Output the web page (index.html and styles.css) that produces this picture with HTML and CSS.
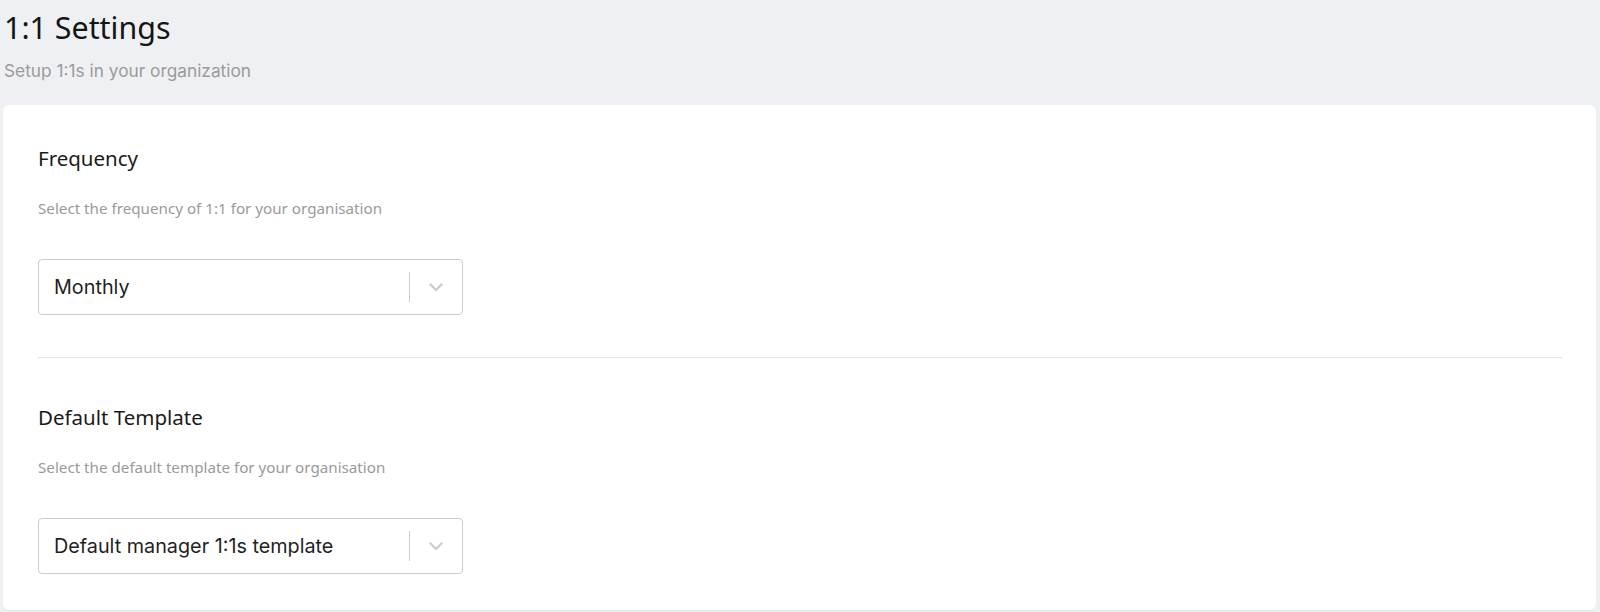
FILE: index.html
```html
<!DOCTYPE html>
<html lang="en">
<head>
<meta charset="utf-8">
<title>1:1 Settings</title>
<link rel="stylesheet" href="styles.css">
</head>
<body>
<header class="page-header">
  <h1 class="page-title">1:1 Settings</h1>
  <p class="page-subtitle">Setup 1:1s in your organization</p>
</header>
<main class="card">
  <section class="setting">
    <h2 class="setting-title">Frequency</h2>
    <p class="setting-desc">Select the frequency of 1:1 for your organisation</p>
    <div class="select">
      <span class="select-value">Monthly</span>
      <span class="select-sep"></span>
      <span class="select-arrow">
        <svg width="14" height="9" viewBox="0 0 14 9"><path d="M1.5 1.5 L7 7 L12.5 1.5" fill="none" stroke="#cccccc" stroke-width="2.4" stroke-linecap="round" stroke-linejoin="round"/></svg>
      </span>
    </div>
  </section>
  <hr class="divider">
  <section class="setting">
    <h2 class="setting-title">Default Template</h2>
    <p class="setting-desc">Select the default template for your organisation</p>
    <div class="select">
      <span class="select-value">Default manager 1:1s template</span>
      <span class="select-sep"></span>
      <span class="select-arrow">
        <svg width="14" height="9" viewBox="0 0 14 9"><path d="M1.5 1.5 L7 7 L12.5 1.5" fill="none" stroke="#cccccc" stroke-width="2.4" stroke-linecap="round" stroke-linejoin="round"/></svg>
      </span>
    </div>
  </section>
</main>
</body>
</html>
```
FILE: styles.css
```css
* { box-sizing: border-box; }
html, body { margin: 0; padding: 0; }
body {
  background: #eff0f4;
  font-family: "Noto Sans", "Open Sans", sans-serif;
  color: #1a1a1a;
  height: 612px;
  overflow: hidden;
}
.page-header {
  padding: 8px 0 0 4px;
  height: 105px;
}
.page-title {
  margin: 0;
  font-size: 30.4px;
  font-weight: 400;
  line-height: 40px;
  color: #151515;
}
.page-subtitle {
  margin: 13px 0 0;
  font-family: Inter, "Liberation Sans", sans-serif;
  font-size: 17.3px;
  line-height: 20px;
  color: #9b9b9b;
}
.card {
  background: #ffffff;
  margin: 0 4px 0 3px;
  border-radius: 6px;
  padding: 40px 34px 36px 35px;
  box-shadow: 0 1px 1px rgba(0,0,0,0.04);
}
.setting-title {
  margin: 0;
  font-size: 20.5px;
  font-weight: 400;
  line-height: 26px;
  color: #1a1a1a;
}
.setting-desc {
  margin: 27px 0 0;
  font-size: 15.2px;
  line-height: 20px;
  color: #9a9a9a;
}
.select {
  margin-top: 41px;
  width: 425px;
  height: 56px;
  border: 1px solid #cccccc;
  border-radius: 4px;
  display: flex;
  align-items: center;
  padding-left: 15px;
}
.select-value {
  flex: 1;
  font-family: Inter, "Liberation Sans", sans-serif;
  font-size: 19.8px;
  color: #1f1f1f;
}
.select-sep {
  width: 1px;
  height: 30px;
  background: #cccccc;
}
.select-arrow {
  width: 52px;
  display: flex;
  justify-content: center;
  align-items: center;
}
.select-arrow svg { display: block; }
.divider {
  border: 0;
  border-top: 1px solid #e6e6e6;
  margin: 42px 0 0;
}
.divider + .setting { padding-top: 46px; }
```
